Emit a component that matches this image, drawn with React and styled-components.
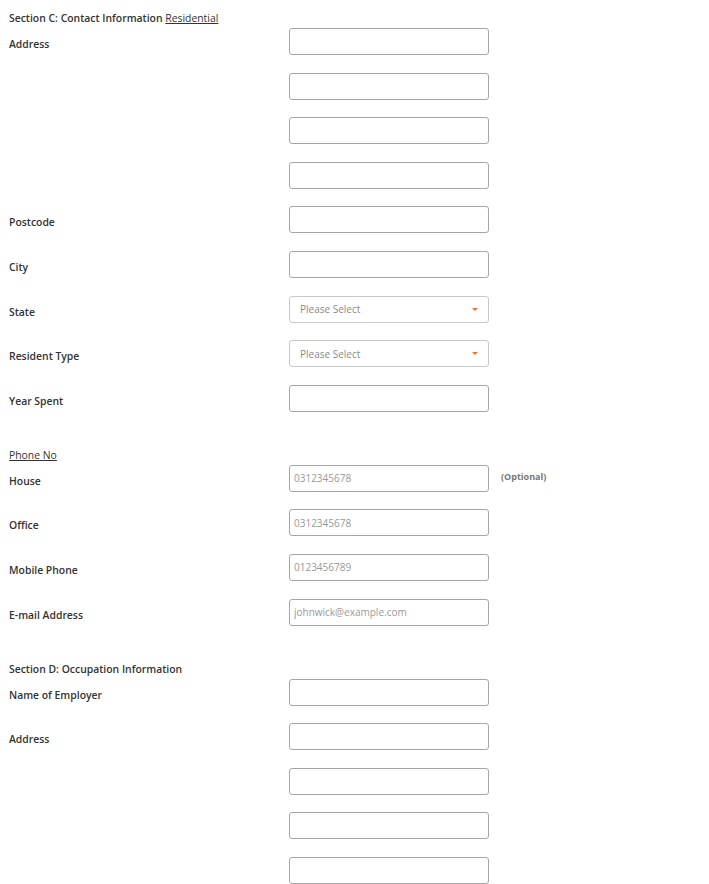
import React from 'react'
import styled, { createGlobalStyle } from 'styled-components'

const Global = createGlobalStyle`
    body {
        margin: 0;
        background: #fff;
        font-family: 'Open Sans', 'Noto Sans', sans-serif;
        color: #333;
    }
`

const Page = styled.div`
    padding: 10px 9px 0 9px;
`

const Group = styled.section`
    margin-bottom: 35px;
`

const Heading = styled.div`
    font-size: 10.4px;
    line-height: 16px;
    font-weight: ${p => (p.plain ? 400 : 600)};
    margin-bottom: 2px;
    a {
        color: #333;
        font-weight: 400;
        text-decoration: underline;
    }
`

const Rows = styled.div`
    display: flex;
    flex-direction: column;
    gap: 17.6px;
`

const Row = styled.div`
    display: flex;
    align-items: flex-start;
`

const Label = styled.label`
    width: 280px;
    flex: none;
    padding-top: 8px;
    font-size: 10.4px;
    line-height: 16px;
    font-weight: 600;
    color: #333;
`

const Input = styled.input`
    box-sizing: border-box;
    width: 200px;
    height: 27px;
    border: 1px solid #a6a6a6;
    border-radius: 3px;
    padding: 0 4px;
    font-family: inherit;
    font-size: 10px;
    color: #333;
    background: #fff;
    outline: none;
    &::placeholder {
        color: #999;
    }
`

const Select = styled.div`
    box-sizing: border-box;
    width: 200px;
    height: 27px;
    border: 1px solid #c8c8c8;
    border-radius: 3px;
    padding: 0 10px 0 10px;
    display: flex;
    align-items: center;
    justify-content: space-between;
    font-size: 10px;
    color: #8a8a8a;
    background: #fff;
`

const Caret = styled.span`
    width: 0;
    height: 0;
    border-left: 3px solid transparent;
    border-right: 3px solid transparent;
    border-top: 3px solid #e8743b;
`

const Note = styled.span`
    margin-left: 12px;
    padding-top: 5px;
    font-size: 9px;
    line-height: 14px;
    font-weight: 700;
    color: #777;
`

function Field({ label, placeholder, select, note }) {
  return (
    <Row>
      <Label>{label}</Label>
      {select ? (
        <Select>
          <span>Please Select</span>
          <Caret />
        </Select>
      ) : (
        <Input placeholder={placeholder} />
      )}
      {note && <Note>{note}</Note>}
    </Row>
  )
}

export default function App() {
  return (
    <Page>
      <Global />
      <Group>
        <Heading>
          Section C: Contact Information <a>Residential</a>
        </Heading>
        <Rows>
          <Field label="Address" />
          <Field label="" />
          <Field label="" />
          <Field label="" />
          <Field label="Postcode" />
          <Field label="City" />
          <Field label="State" select />
          <Field label="Resident Type" select />
          <Field label="Year Spent" />
        </Rows>
      </Group>

      <Group>
        <Heading plain>
          <a>Phone No</a>
        </Heading>
        <Rows>
          <Field label="House" placeholder="0312345678" note="(Optional)" />
          <Field label="Office" placeholder="0312345678" />
          <Field label="Mobile Phone" placeholder="0123456789" />
          <Field label="E-mail Address" placeholder="johnwick@example.com" />
        </Rows>
      </Group>

      <Group>
        <Heading>Section D: Occupation Information</Heading>
        <Rows>
          <Field label="Name of Employer" />
          <Field label="Address" />
          <Field label="" />
          <Field label="" />
          <Field label="" />
        </Rows>
      </Group>
    </Page>
  )
}
